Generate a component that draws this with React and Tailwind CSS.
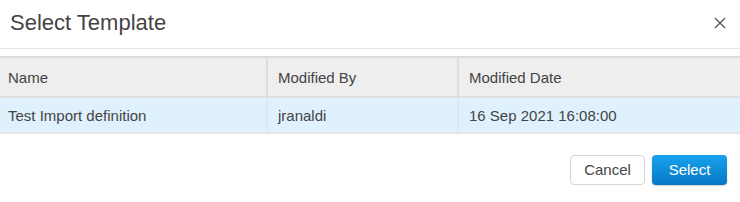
export default function App() {
    return (
        <div className="w-[740px] h-[202px] bg-white font-['Liberation_Sans',Arial,sans-serif] text-[#333]">
            {/* Header */}
            <div className="h-[49px] flex items-center justify-between pl-[10px] pr-[14px] border-b border-[#e5e5e5]">
                <h1 className="text-[22px] text-[#444] leading-none -mt-[2px]">Select Template</h1>
                <button className="text-[#555] -mt-[2px]">
                    <svg width="12" height="12" viewBox="0 0 12 12" stroke="currentColor" strokeWidth="1.3">
                        <path d="M1 1L11 11M11 1L1 11" />
                    </svg>
                </button>
            </div>

            {/* Table */}
            <div className="mt-[7px] border-t-2 border-[#dcdcdc]">
                <div className="flex h-[40px] bg-[#eeeeee] border-b-2 border-[#dfdfdf] text-[15px] text-[#444]">
                    <div className="w-[268px] flex items-center pl-[8px] pt-[2px] border-r-2 border-[#dcdcdc]">Name</div>
                    <div className="w-[191px] flex items-center pl-[10px] pt-[2px] border-r-2 border-[#dcdcdc]">Modified By</div>
                    <div className="flex-1 flex items-center pl-[10px] pt-[2px]">Modified Date</div>
                </div>
                <div className="flex h-[36px] bg-[#dff1fc] border-b-2 border-[#e6e6e6] text-[15px] text-[#444]">
                    <div className="w-[268px] flex items-center pl-[8px] pt-[3px] border-r-2 border-[#e0e8ee]">Test Import definition</div>
                    <div className="w-[191px] flex items-center pl-[10px] pt-[3px] border-r-2 border-[#e0e8ee]">jranaldi</div>
                    <div className="flex-1 flex items-center pl-[10px] pt-[3px]">16 Sep 2021 16:08:00</div>
                </div>
            </div>

            {/* Footer */}
            <div className="flex justify-end gap-[7px] pr-[13px] pt-[21px]">
                <button className="w-[75px] h-[30px] rounded-[4px] border border-[#d5d5d5] bg-white text-[15px] text-[#444]">
                    Cancel
                </button>
                <button className="w-[75px] h-[30px] rounded-[4px] bg-gradient-to-b from-[#18a3ec] to-[#0877c4] text-[15px] text-white shadow-[0_1px_2px_rgba(0,0,0,0.2)]">
                    Select
                </button>
            </div>
        </div>
    );
}
